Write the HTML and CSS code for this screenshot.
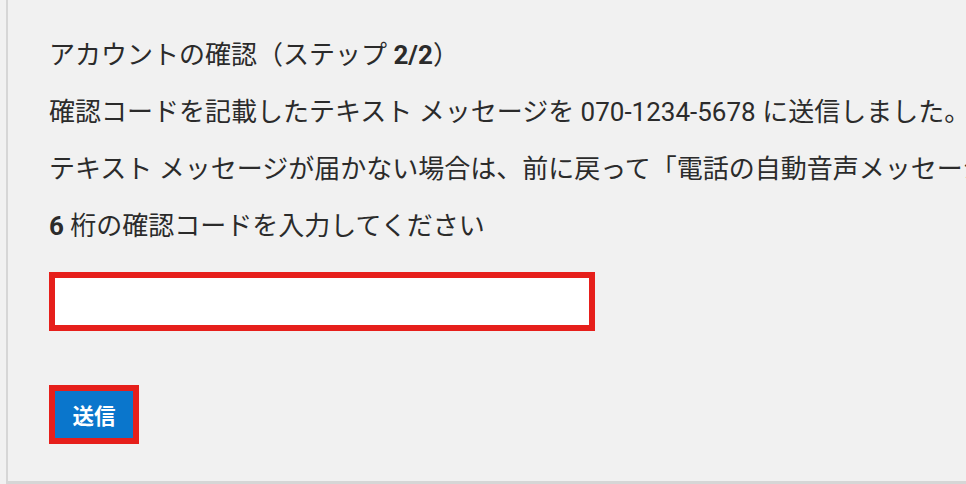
FILE: index.html
```html
<!doctype html>
<html lang="ja">
  <head>
    <meta charset="UTF-8" />
    <meta name="viewport" content="width=device-width, initial-scale=1.0" />
    <title>アカウントの確認</title>
    <link rel="stylesheet" href="styles.css">
  </head>
  <body>
    <div class="panel">
      <p class="line">アカウントの確認（ステップ <strong>2/2</strong>）</p>
      <p class="line">確認コードを記載したテキスト メッセージを 070-1234-5678 に送信しました。</p>
      <p class="line">テキスト メッセージが届かない場合は、前に戻って「電話の自動音声メッセージで確認コードを受け取る」を選択してください。</p>
      <p class="line"><strong>6</strong> 桁の確認コードを入力してください</p>
      <div class="code-field">
        <input type="text" class="code-input" />
      </div>
      <div class="actions">
        <button class="submit-button">送信</button>
      </div>
    </div>
  </body>
</html>
```

FILE: styles.css
```css
* {
  margin: 0;
  padding: 0;
  box-sizing: border-box;
}
body {
  background-color: #f1f1f1;
  color: #2b2b2b;
  font-family: Roboto, "Noto Sans CJK JP", sans-serif;
  overflow: hidden;
}
.panel {
  margin-left: 6px;
  height: 484px;
  border-left: 2px solid #d6d6d6;
  border-bottom: 3px solid #d6d6d6;
  padding: 36px 0 0 41px;
  white-space: nowrap;
  overflow: hidden;
}
.line {
  font-size: 26px;
  line-height: 38px;
  margin-bottom: 19px;
}
.line strong {
  font-weight: bold;
}
.code-field {
  margin-top: 27px;
}
.code-input {
  display: block;
  width: 546px;
  height: 59px;
  border: 6px solid #e61f1b;
  background: #fff;
  outline: none;
}
.actions {
  margin-top: 54px;
}
.submit-button {
  width: 90px;
  height: 59px;
  border: 6px solid #e61f1b;
  background-color: #0a76cc;
  color: #fff;
  font-family: Roboto, "Noto Sans CJK JP", sans-serif;
  font-size: 21.5px;
  font-weight: bold;
  cursor: pointer;
}
```
